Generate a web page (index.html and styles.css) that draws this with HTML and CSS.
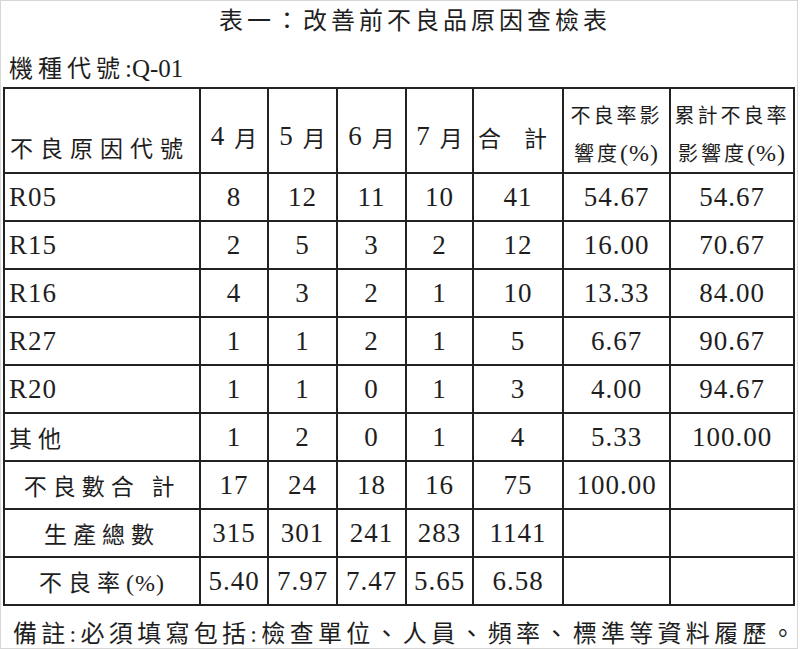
FILE: index.html
```html
<!DOCTYPE html>
<html lang="zh-Hant">
<head>
<meta charset="utf-8">
<title>表一：改善前不良品原因查檢表</title>
<link rel="stylesheet" href="styles.css">
</head>
<body>
<div class="page">
  <h1 class="title">表一：改善前不良品原因查檢表</h1>
  <div class="model"><span class="zh">機種代號</span>:Q-01</div>
  <div class="grid">
    <div class="cell head first"><span class="zh lbl">不良原因代號</span></div>
    <div class="cell head"><span class="mh">4</span><span class="zh mon">月</span></div>
    <div class="cell head"><span class="mh">5</span><span class="zh mon">月</span></div>
    <div class="cell head"><span class="mh">6</span><span class="zh mon">月</span></div>
    <div class="cell head"><span class="mh">7</span><span class="zh mon">月</span></div>
    <div class="cell head l"><span class="zh mon">合　計</span></div>
    <div class="cell head stack"><span class="zh sm">不良率影</span><span class="zh sm">響度<span class="pc">(%)</span></span></div>
    <div class="cell head stack"><span class="zh sm">累計不良率</span><span class="zh sm">影響度<span class="pc">(%)</span></span></div>

    <div class="cell l">R05</div><div class="cell">8</div><div class="cell">12</div><div class="cell">11</div><div class="cell">10</div><div class="cell">41</div><div class="cell">54.67</div><div class="cell">54.67</div>
    <div class="cell l">R15</div><div class="cell">2</div><div class="cell">5</div><div class="cell">3</div><div class="cell">2</div><div class="cell">12</div><div class="cell">16.00</div><div class="cell">70.67</div>
    <div class="cell l">R16</div><div class="cell">4</div><div class="cell">3</div><div class="cell">2</div><div class="cell">1</div><div class="cell">10</div><div class="cell">13.33</div><div class="cell">84.00</div>
    <div class="cell l">R27</div><div class="cell">1</div><div class="cell">1</div><div class="cell">2</div><div class="cell">1</div><div class="cell">5</div><div class="cell">6.67</div><div class="cell">90.67</div>
    <div class="cell l">R20</div><div class="cell">1</div><div class="cell">1</div><div class="cell">0</div><div class="cell">1</div><div class="cell">3</div><div class="cell">4.00</div><div class="cell">94.67</div>
    <div class="cell l"><span class="zh lbl">其他</span></div><div class="cell">1</div><div class="cell">2</div><div class="cell">0</div><div class="cell">1</div><div class="cell">4</div><div class="cell">5.33</div><div class="cell">100.00</div>
    <div class="cell"><span class="zh lbl">不良數合 計</span></div><div class="cell">17</div><div class="cell">24</div><div class="cell">18</div><div class="cell">16</div><div class="cell">75</div><div class="cell">100.00</div><div class="cell"></div>
    <div class="cell"><span class="zh lbl">生產總數</span></div><div class="cell">315</div><div class="cell">301</div><div class="cell">241</div><div class="cell">283</div><div class="cell">1141</div><div class="cell"></div><div class="cell"></div>
    <div class="cell"><span class="zh lbl">不良率<span class="pc">(%)</span></span></div><div class="cell">5.40</div><div class="cell">7.97</div><div class="cell">7.47</div><div class="cell">5.65</div><div class="cell">6.58</div><div class="cell"></div><div class="cell"></div>
  </div>
  <p class="note">備註:必須填寫包括:檢查單位、人員、頻率、標準等資料履歷。</p>
</div>
</body>
</html>
```

FILE: styles.css
```css
* {
  box-sizing: border-box;
  margin: 0;
  padding: 0;
}

body {
  background: #ffffff;
  color: #1e1e1e;
  font-family: "Liberation Serif", "Noto Sans CJK TC", serif;
}

.page {
  width: 798px;
  height: 649px;
  border: 1px solid #d6d6d6;
  padding-left: 2px;
  overflow: hidden;
}

.title {
  height: 50px;
  padding: 5px 0 0 30px;
  font-size: 24px;
  font-weight: 400;
  line-height: 30px;
  letter-spacing: 4px;
  text-align: center;
}

.model {
  height: 36px;
  padding-left: 6px;
  font-size: 25px;
  line-height: 36px;
}

.model .zh {
  font-size: 24px;
  letter-spacing: 5px;
}

.grid {
  display: grid;
  width: 792px;
  grid-template-columns: 196px 68px 69px 69px 67px 90px 107px 124px;
  grid-template-rows: 85px repeat(9, 48px);
  border-left: 2px solid #222;
  border-top: 2px solid #222;
}

.cell {
  display: flex;
  align-items: center;
  justify-content: center;
  border-right: 2px solid #222;
  border-bottom: 2px solid #222;
  font-size: 27px;
  letter-spacing: 1px;
  white-space: pre;
}

.cell.l {
  justify-content: flex-start;
  padding-left: 4px;
}

.head {
  padding-top: 12px;
}

.mh {
  margin-right: 9px;
}

.head.first {
  align-items: flex-end;
  padding: 0 0 8px 5px;
  justify-content: flex-start;
}

.head.stack {
  flex-direction: column;
  padding-top: 10px;
}

.zh {
  font-size: 23px;
  letter-spacing: 6px;
}

.zh.lbl {
  letter-spacing: 6px;
}

.head.first .zh.lbl {
  letter-spacing: 7px;
}

.zh.mon {
  font-size: 23px;
  letter-spacing: 0;
}

.zh.sm {
  font-size: 20px;
  letter-spacing: 3px;
  line-height: 37px;
}

.pc {
  font-size: 24px;
  letter-spacing: 1px;
}

.note {
  margin-top: 13px;
  padding-left: 10px;
  font-size: 24px;
  line-height: 30px;
  letter-spacing: 4.3px;
  white-space: nowrap;
}
```
